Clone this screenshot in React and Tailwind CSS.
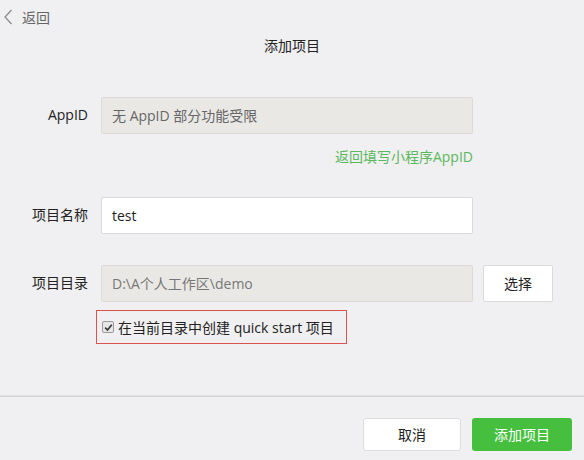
export default function App() {
  return (
    <div
      className="w-[584px] h-[460px] bg-[#f0eff1] flex flex-col text-[#333] overflow-hidden"
      style={{ fontFamily: '"Open Sans", "Noto Sans CJK SC", sans-serif' }}
    >
      {/* 返回 */}
      <div className="h-[34px] flex items-center pl-[3px] gap-[9px] text-[14px] text-[#666]">
        <svg width="10" height="16" viewBox="0 0 10 16" fill="none">
          <path d="M8.5 1 L2 8 L8.5 15" stroke="#888" strokeWidth="1.2" />
        </svg>
        <span>返回</span>
      </div>

      <div className="h-[24px] leading-[24px] text-center text-[14px] text-[#222]">添加项目</div>

      {/* 表单 */}
      <div className="pt-[39px] flex flex-col">
        <div className="flex items-center">
          <div className="w-[101px] pr-[13px] text-right text-[14px] text-[#222] pb-[3px]">AppID</div>
          <div className="w-[372px] h-[37px] border border-[#dadad8] bg-[#e9e8e5] rounded-[2px] flex items-center px-[10px] text-[14px] text-[#666]">
            无 AppID 部分功能受限
          </div>
        </div>
        <div className="w-[473px] mt-[14px] mb-[31px] leading-[18px] text-right text-[14px] text-[#5cb85c]">
          返回填写小程序AppID
        </div>

        <div className="flex items-center">
          <div className="w-[101px] pr-[13px] text-right text-[14px] text-[#222] pb-[3px]">项目名称</div>
          <div className="w-[372px] h-[37px] border border-[#dadada] bg-white rounded-[2px] flex items-center px-[10px] text-[14px] text-[#222]">
            test
          </div>
        </div>

        <div className="flex items-center mt-[31px]">
          <div className="w-[101px] pr-[13px] text-right text-[14px] text-[#222] pb-[3px]">项目目录</div>
          <div className="w-[372px] h-[37px] border border-[#dadad8] bg-[#e9e8e5] rounded-[2px] flex items-center px-[10px] text-[14px] text-[#777]">
            D:\A个人工作区\demo
          </div>
          <button className="ml-[10px] w-[70px] h-[37px] border border-[#dadada] bg-white rounded-[2px] text-[14px] text-[#222]">
            选择
          </button>
        </div>

        <div className="ml-[96px] mt-[8px] w-[251px] h-[34px] border border-[#d9534f] flex items-center pl-[5px] gap-[4px] text-[14px] text-[#222]">
          <span className="w-[12px] h-[12px] rounded-[2px] border border-[#9a9a9a] bg-[#e6e6e6] flex items-center justify-center">
            <svg width="9" height="9" viewBox="0 0 9 9" fill="none">
              <path d="M1.2 4.6 L3.5 7 L7.8 1.8" stroke="#333" strokeWidth="1.6" />
            </svg>
          </span>
          <span>在当前目录中创建 quick start 项目</span>
        </div>
      </div>

      <div className="flex-1" />

      {/* 底部 */}
      <div className="h-[65px] border-t border-[#e3e2e4] flex flex-col">
        <div className="h-[1px] bg-[#d2d1d3]" />
        <div className="flex justify-end items-start pt-[21px] pr-[12px] gap-[11px]">
          <button className="w-[98px] h-[33px] bg-white border border-[#dcdcdc] rounded-[3px] text-[14px] text-[#222]">
            取消
          </button>
          <button className="w-[100px] h-[33px] bg-[#46bf3e] rounded-[3px] text-[14px] text-white">
            添加项目
          </button>
        </div>
      </div>
    </div>
  );
}
